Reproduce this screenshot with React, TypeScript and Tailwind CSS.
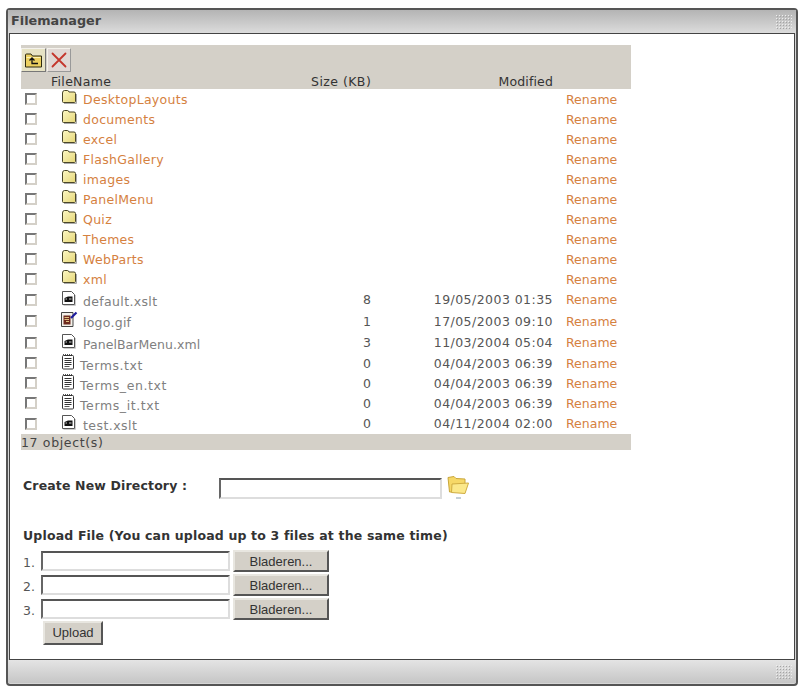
const folders = [
  "DesktopLayouts",
  "documents",
  "excel",
  "FlashGallery",
  "images",
  "PanelMenu",
  "Quiz",
  "Themes",
  "WebParts",
  "xml",
];

const files = [
  { name: "default.xslt", icon: "xslt", size: "8", date: "19/05/2003 01:35", h: "h-[21px]", track: "tracking-[0.35px]" },
  { name: "logo.gif", icon: "gif", size: "1", date: "17/05/2003 09:10", h: "h-[22px]", track: "tracking-[0.25px]" },
  { name: "PanelBarMenu.xml", icon: "xslt", size: "3", date: "11/03/2004 05:04", h: "h-[21px]", track: "tracking-[0.05px]" },
  { name: "Terms.txt", icon: "txt", size: "0", date: "04/04/2003 06:39", h: "h-[20px]", track: "tracking-[0.55px]" },
  { name: "Terms_en.txt", icon: "txt", size: "0", date: "04/04/2003 06:39", h: "h-[20px]", track: "tracking-[0.6px]" },
  { name: "Terms_it.txt", icon: "txt", size: "0", date: "04/04/2003 06:39", h: "h-[20px]", track: "tracking-[0.6px]" },
  { name: "test.xslt", icon: "xslt", size: "0", date: "04/11/2004 02:00", h: "h-[21px]", track: "tracking-[0.45px]" },
];

function FolderIcon() {
  return (
    <svg width="16" height="14" viewBox="0 0 16 14" className="block">
      <defs>
        <linearGradient id="fold" x1="0" y1="0" x2="1" y2="1">
          <stop offset="0" stopColor="#fdf8c4" />
          <stop offset="1" stopColor="#e6d777" />
        </linearGradient>
      </defs>
      <path d="M1.5 3 Q1.5 .5 3.5 .5 L6.5 .5 Q7.5 .5 8 2 L13 2 Q14.5 2 14.5 3.5 L14.5 11.5 Q14.5 12.5 13.5 12.5 L2.5 12.5 Q1.5 12.5 1.5 11.5 Z" fill="url(#fold)" stroke="#4a4628" />
      <path d="M3 13.5 L15.5 13.5 L15.5 4" stroke="#aaa" fill="none" />
    </svg>
  );
}

function XsltIcon() {
  return (
    <svg width="14" height="15" viewBox="0 0 14 15" className="block">
      <path d="M.5 .5 L9.5 .5 L12.5 3.5 L12.5 13.5 L.5 13.5 Z" fill="#fff" stroke="#555" />
      <path d="M2.5 7 L6 5.5 L6 11 L2.5 11 Z M6 5.5 L10.5 5.5 L10.5 11 L6 11 Z" fill="#111" />
      <path d="M3.5 8 L5 8 M7 8 L9.5 8" stroke="#cfcfcf" />
      <path d="M13.5 4 L13.5 14.5 L1.5 14.5" stroke="#ccc" fill="none" />
    </svg>
  );
}

function GifIcon() {
  return (
    <svg width="17" height="17" viewBox="0 0 17 17" className="block">
      <path d="M.5 2.5 L12 2.5 L12 16.5 L.5 16.5 Z" fill="#f4f1ea" stroke="#444" />
      <rect x="2.5" y="5.5" width="7" height="9" fill="#6e2a1e" />
      <path d="M3.5 7.5 L8 7.5 M3.5 9.5 L8 9.5 M5 11.5 L8 11.5" stroke="#e0c080" />
      <path d="M10 8 L15.5 2.5" stroke="#1c1c9c" strokeWidth="2.2" />
    </svg>
  );
}

function TxtIcon() {
  return (
    <svg width="14" height="17" viewBox="0 0 14 17" className="block">
      <rect x="1.5" y="2.5" width="11" height="13.5" rx="1" fill="#fff" stroke="#333" />
      <path d="M2 1.5 L12 1.5" stroke="#555" strokeDasharray="1 1" />
      <path d="M3.5 5.5 L10.5 5.5 M3.5 7.5 L10.5 7.5 M3.5 9.5 L10.5 9.5 M3.5 11.5 L10.5 11.5" stroke="#333" />
      <path d="M3.5 13.5 L8.5 13.5" stroke="#555" />
    </svg>
  );
}

function OpenFolderIcon() {
  return (
    <svg width="26" height="24" viewBox="0 0 26 24" className="block">
      <path d="M2 2.5 L8 1.5 L10 3.5 L19 4 L19 9 L6 17 L3.5 17 Z" fill="#f6d867" stroke="#c9a63a" />
      <path d="M6 9 L22.5 8 L19 18.5 L5.5 17.5 Z" fill="#fbe88a" stroke="#d0ad42" />
      <path d="M10 23 L15 23" stroke="#8aa0b0" />
    </svg>
  );
}

function UpFolderIcon() {
  return (
    <svg width="18" height="15" viewBox="0 0 18 15" className="block">
      <path d="M.5 3 L.5 2 Q.5 1 1.5 1 L6 1 L7.5 3 L16.5 3 L16.5 14 L.5 14 Z" fill="#ecd060" stroke="#2e2a10" />
      <path d="M1.5 4.5 L15.5 4.5" stroke="#fff3b0" />
      <path d="M4.5 7.5 L7 5 L9.5 7.5 M7 5 L7 10.5 L13 10.5" fill="none" stroke="#111" strokeWidth="1.3" />
    </svg>
  );
}

function DeleteIcon() {
  return (
    <svg width="16" height="16" viewBox="0 0 16 16" className="block">
      <path d="M1.5 1.5 L14.5 14.5 M14.5 1.5 L1.5 14.5" stroke="#c4362c" strokeWidth="1.8" strokeLinecap="round" />
    </svg>
  );
}

function Grip() {
  return (
    <svg width="16" height="14" viewBox="0 0 16 14" className="block">
      <defs>
        <pattern id="grip" width="3" height="3" patternUnits="userSpaceOnUse">
          <rect width="1" height="1" fill="#eeeeee" />
          <rect x="1" y="1" width="1" height="1" fill="#a4a4a4" />
        </pattern>
      </defs>
      <rect width="16" height="14" fill="url(#grip)" />
    </svg>
  );
}

function Checkbox() {
  return (
    <div className="ml-[4px] h-[12px] w-[12px] border-2 border-t-[#777] border-r-[#d4d0c8] border-b-[#d4d0c8] border-l-[#777] bg-white" />
  );
}

function Row({ h, children }: { h: string; children: React.ReactNode }) {
  return (
    <div className={`grid grid-cols-[40px_250px_60px_182px_78px] items-center ${h}`}>{children}</div>
  );
}

function Rename() {
  return <div className="pt-[2px] pl-[13px] text-[#d5813f]">Rename</div>;
}

function TextBox({ w, h }: { w: string; h: string }) {
  return (
    <div className={`${w} ${h} border-2 border-t-[#555] border-r-[#ddd] border-b-[#ddd] border-l-[#666] bg-white`} />
  );
}

function BrowseButton() {
  return (
    <button className="ml-[3px] h-[22px] w-[96px] border-2 border-t-[#e8e6e0] border-r-[#555] border-b-[#555] border-l-[#e8e6e0] bg-[#d4d0c8] pt-[2px] font-['Liberation_Sans',sans-serif] text-[13px] text-[#333]">
      Bladeren...
    </button>
  );
}

export default function App() {
  return (
    <div className="h-[693px] w-[803px] bg-white pt-[8px] pl-[6px] font-['DejaVu_Sans',sans-serif] text-[12.5px] leading-none text-[#777]">
      <div className="h-[678px] w-[792px] rounded-[4px] border-2 border-[#555] bg-[#d6d6d6]">
        <div className="flex h-[23px] items-center justify-between bg-gradient-to-b from-[#b4b4b4] to-[#dcdcdc] pr-[4px] pl-[3px]">
          <span className="text-[12.8px] font-bold text-[#444]">Filemanager</span>
          <Grip />
        </div>
        <div className="mx-[1px] h-[627px] border border-[#444] bg-white pt-[11px] pl-[11px]">
          <div className="w-[610px]">
            <div className="h-[44px] bg-[#d4d0c8] text-[#333]">
              <div className="flex h-[27px] items-end gap-[1px]">
                <div className="flex h-[24px] w-[25px] items-center justify-center border border-t-[#f4f2ec] border-r-[#777] border-b-[#777] border-l-[#f4f2ec] bg-[#e6e2c4]">
                  <UpFolderIcon />
                </div>
                <div className="flex h-[24px] w-[24px] items-center justify-center border border-t-[#f4f2ec] border-r-[#999] border-b-[#999] border-l-[#f4f2ec] bg-[#e0d8d4]">
                  <DeleteIcon />
                </div>
              </div>
              <div className="grid h-[17px] grid-cols-[30px_260px_60px_182px] items-end pb-[1px]">
                <div />
                <div className="tracking-[0.3px]">FileName</div>
                <div className="text-right tracking-[0.45px] whitespace-nowrap">Size (KB)</div>
                <div className="text-right tracking-[0.15px]">Modified</div>
              </div>
            </div>

            {folders.map((name) => (
              <Row key={name} h="h-[20px]">
                <Checkbox />
                <div className="flex h-full text-[#d5813f]">
                  <div className="w-[22px] pt-[1px]">
                    <FolderIcon />
                  </div>
                  <span className="pt-[5px] tracking-[0.3px]">{name}</span>
                </div>
                <div />
                <div />
                <Rename />
              </Row>
            ))}

            {files.map((f) => (
              <Row key={f.name} h={f.h}>
                <Checkbox />
                <div className="flex h-full text-[#808080]">
                  <div className={f.icon === "txt" ? "w-[19px]" : "w-[22px]"}>
                    {f.icon === "xslt" && <div className="pt-[2px] pl-[1px]"><XsltIcon /></div>}
                    {f.icon === "gif" && <GifIcon />}
                    {f.icon === "txt" && <TxtIcon />}
                  </div>
                  <span className={`pt-[7px] ${f.track}`}>{f.name}</span>
                </div>
                <div className="pt-[2px] text-right text-[#555]">{f.size}</div>
                <div className="pt-[2px] text-right tracking-[0.45px] text-[#555]">{f.date}</div>
                <Rename />
              </Row>
            ))}

            <div className="flex h-[16px] items-center bg-[#d4d0c8] pt-[2px] tracking-[0.65px] text-[#444]">17 object(s)</div>
          </div>

          <div className="mt-[28px] flex h-[21px] items-center pl-[2px]">
            <span className="mb-[4px] w-[196px] font-bold tracking-[0.15px] text-[#333]">Create New Directory :</span>
            <TextBox w="w-[223px]" h="h-[21px]" />
            <div className="mb-[4px] ml-[4px]">
              <OpenFolderIcon />
            </div>
          </div>

          <div className="mt-[31px] pl-[2px] font-bold tracking-[0.17px] text-[#333]">
            Upload File (You can upload up to 3 files at the same time)
          </div>

          <div className="mt-[7px] flex flex-col gap-[2px] pl-[2px]">
            {["1.", "2.", "3."].map((n) => (
              <div key={n} className="flex h-[22px] items-center">
                <span className="w-[18px] pt-[5px] text-[#555]">{n}</span>
                <TextBox w="w-[189px]" h="h-[20px]" />
                <BrowseButton />
              </div>
            ))}
          </div>

          <button className="mt-[1px] ml-[22px] block h-[24px] w-[60px] border-2 border-t-[#e8e6e0] border-r-[#555] border-b-[#555] border-l-[#e8e6e0] bg-[#d4d0c8] font-['Liberation_Sans',sans-serif] text-[13px] text-[#333]">
            Upload
          </button>
        </div>
        <div className="flex h-[23px] items-center justify-end bg-gradient-to-b from-[#e4e4e4] to-[#c6c6c6] pr-[4px]">
          <Grip />
        </div>
      </div>
    </div>
  );
}
